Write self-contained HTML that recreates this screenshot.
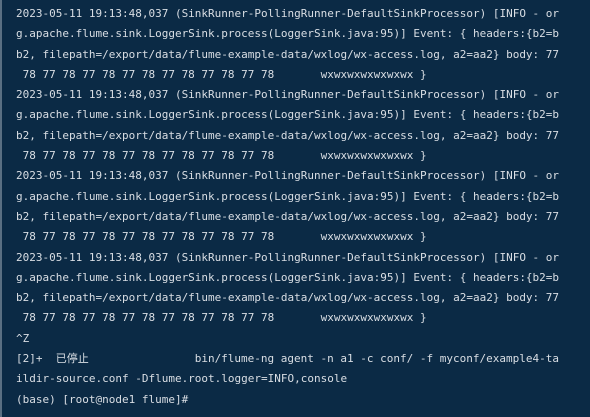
<!DOCTYPE html>
<html><head><meta charset="utf-8"><style>
html,body{margin:0;padding:0;width:590px;height:417px;overflow:hidden;background:#0b2a45}
body{border-left:2px solid #5a6f82;box-sizing:border-box}
pre{margin:0;position:absolute;left:16px;top:4px;font-family:"DejaVu Sans Mono","Liberation Mono","Noto Sans CJK SC",monospace;font-size:11px;line-height:20.3px;color:#d9dee4;white-space:pre}
</style></head><body><pre>2023-05-11 19:13:48,037 (SinkRunner-PollingRunner-DefaultSinkProcessor) [INFO - or
g.apache.flume.sink.LoggerSink.process(LoggerSink.java:95)] Event: { headers:{b2=b
b2, filepath=/export/data/flume-example-data/wxlog/wx-access.log, a2=aa2} body: 77
 78 77 78 77 78 77 78 77 78 77 78 77 78       wxwxwxwxwxwxwx }
2023-05-11 19:13:48,037 (SinkRunner-PollingRunner-DefaultSinkProcessor) [INFO - or
g.apache.flume.sink.LoggerSink.process(LoggerSink.java:95)] Event: { headers:{b2=b
b2, filepath=/export/data/flume-example-data/wxlog/wx-access.log, a2=aa2} body: 77
 78 77 78 77 78 77 78 77 78 77 78 77 78       wxwxwxwxwxwxwx }
2023-05-11 19:13:48,037 (SinkRunner-PollingRunner-DefaultSinkProcessor) [INFO - or
g.apache.flume.sink.LoggerSink.process(LoggerSink.java:95)] Event: { headers:{b2=b
b2, filepath=/export/data/flume-example-data/wxlog/wx-access.log, a2=aa2} body: 77
 78 77 78 77 78 77 78 77 78 77 78 77 78       wxwxwxwxwxwxwx }
2023-05-11 19:13:48,037 (SinkRunner-PollingRunner-DefaultSinkProcessor) [INFO - or
g.apache.flume.sink.LoggerSink.process(LoggerSink.java:95)] Event: { headers:{b2=b
b2, filepath=/export/data/flume-example-data/wxlog/wx-access.log, a2=aa2} body: 77
 78 77 78 77 78 77 78 77 78 77 78 77 78       wxwxwxwxwxwxwx }
^Z
[2]+  已停止                bin/flume-ng agent -n a1 -c conf/ -f myconf/example4-ta
ildir-source.conf -Dflume.root.logger=INFO,console
(base) [root@node1 flume]#</pre></body></html>
